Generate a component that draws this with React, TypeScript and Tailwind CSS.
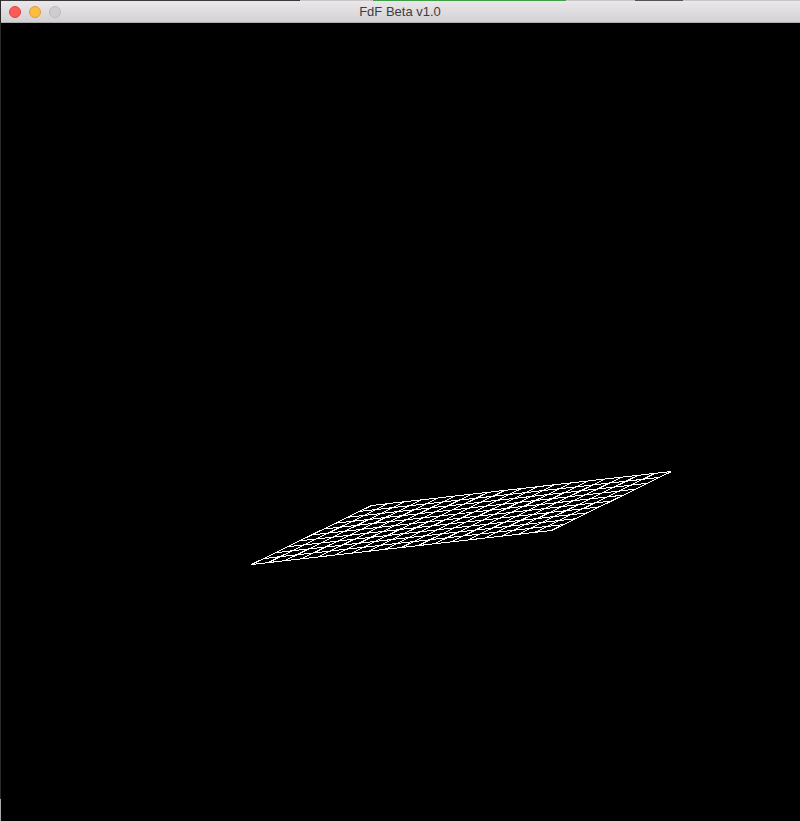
import React from 'react';

const A = { x: 251.5, y: 564.5 };
const B = { x: 371.5, y: 505.5 };
const D = { x: 551.5, y: 530.5 };
const COLS = 18;
const ROWS = 10;

// corner of the wireframe at column i, row j
const point = (i: number, j: number) => {
  const u = i / COLS;
  const v = j / ROWS;
  return { x: A.x + (D.x - A.x) * u + (B.x - A.x) * v, y: A.y + (D.y - A.y) * u + (B.y - A.y) * v };
};

const Wireframe = () => {
  const lines = [];
  for (let j = 0; j <= ROWS; j++) {
    const a = point(0, j);
    const b = point(COLS, j);
    lines.push(<line key={`r${j}`} x1={a.x} y1={a.y} x2={b.x} y2={b.y} />);
  }
  for (let i = 0; i <= COLS; i++) {
    const c = point(i, 0);
    const d = point(i, ROWS);
    lines.push(<line key={`c${i}`} x1={c.x} y1={c.y} x2={d.x} y2={d.y} />);
  }
  return (
    <svg width="800" height="798" viewBox="0 23 800 798" className="block" stroke="#fff" strokeWidth="1" shapeRendering="crispEdges">
      {lines}
    </svg>
  );
};

const App = () => {
  return (
    <div className="relative w-[800px] h-[821px] bg-black overflow-hidden flex flex-col">
      <div className="h-[23px] shrink-0 relative flex items-center justify-center border-b border-[#b0aeb0] bg-gradient-to-b from-[#ebe9eb] to-[#d3d1d3]">
        <div className="absolute left-0 top-0 flex w-full h-px bg-[#c8c6c8]">
          <div className="w-[300px] bg-[#3a3a3a]" />
          <div className="w-[73px]" />
          <div className="w-[193px] bg-[#3f9f45]" />
          <div className="w-[69px]" />
          <div className="w-[48px] bg-[#555555]" />
        </div>
        <div className="absolute left-[9px] top-[6px] flex gap-[8px]">
          <div className="w-3 h-3 rounded-full bg-[#fc5b57] border border-[#e0443e]" />
          <div className="w-3 h-3 rounded-full bg-[#fdbc40] border border-[#dea034]" />
          <div className="w-3 h-3 rounded-full bg-[#cfcdcf] border border-[#bdbbbd]" />
        </div>
        <span className="text-[13px] leading-none text-[#3f3d3f] font-['Liberation_Sans',sans-serif]">FdF Beta v1.0</span>
      </div>
      <Wireframe />
      {/* sliver of the desktop showing down the left edge */}
      <div className="absolute left-0 top-0 bottom-0 w-px bg-[#2a2a2a]" />
      <div className="absolute left-0 top-[799px] bottom-0 w-px bg-[#a8a8a8]" />
    </div>
  );
};

export default App;
